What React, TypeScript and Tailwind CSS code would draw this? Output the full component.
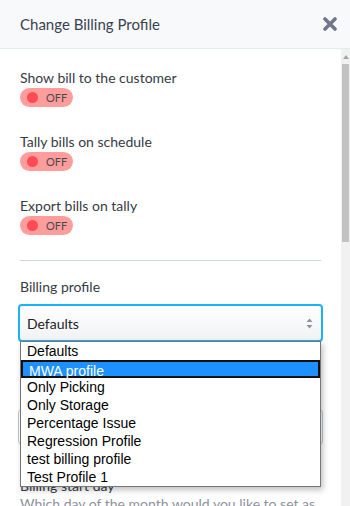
import { useState } from "react";

const profiles = [
  "Defaults",
  "MWA profile",
  "Only Picking",
  "Only Storage",
  "Percentage Issue",
  "Regression Profile",
  "test billing profile",
  "Test Profile 1",
];

function OffToggle() {
  return (
    <div className="mt-[1px] flex h-[19px] w-[53px] items-center rounded-full bg-[#ff9d9d] pl-[7px]">
      <span className="h-[11px] w-[11px] rounded-full bg-[#ff4b55]" />
      <span className="ml-[8px] text-[11px] leading-none text-[#4a4a4a]">OFF</span>
    </div>
  );
}

function SettingRow({ label, last }: { label: string; last?: boolean }) {
  return (
    <div className={last ? "mb-[25px]" : "mb-[26px]"}>
      <div className="text-[14px] leading-[18px] text-[#363b45]">{label}</div>
      <OffToggle />
    </div>
  );
}

export default function App() {
  const [selected] = useState(1);

  return (
    <div className="relative flex h-[506px] w-[350px] flex-col overflow-hidden bg-white font-['Lato','Open_Sans',sans-serif]">
      <header className="flex h-[49px] shrink-0 items-center justify-between border-b border-[#e6ebf2] bg-[#f8f9fb] pl-[20px] pr-[13px]">
        <h1 className="text-[15px] text-[#3b4150]">Change Billing Profile</h1>
        <svg width="14" height="14" viewBox="0 0 14 14" className="text-[#6f7788]">
          <path d="M2 2 L12 12 M12 2 L2 12" stroke="currentColor" strokeWidth="3.6" strokeLinecap="round" />
        </svg>
      </header>

      <div className="flex min-h-0 flex-1">
        <div className="flex-1 px-[20px] pt-[20px]">
          <SettingRow label="Show bill to the customer" />
          <SettingRow label="Tally bills on schedule" />
          <SettingRow label="Export bills on tally" last />

          <div className="border-t border-[#c9d6e6]" />

          <div className="mt-[17px] text-[14px] leading-[18px] text-[#363b45]">Billing profile</div>
          <div className="relative -mx-[2px] mt-[8px]">
            <div className="flex h-[38px] items-center justify-between rounded-[4px] border-2 border-[#1ab3f5] bg-gradient-to-b from-white to-[#f1f2f4] pl-[7px] pr-[8px]">
              <span className="text-[14px] text-[#222]">Defaults</span>
              <svg width="7" height="11" viewBox="0 0 7 11" className="text-[#8a93a3]">
                <path d="M3.5 0.5 L6.5 4 L0.5 4 Z M3.5 10.5 L6.5 7 L0.5 7 Z" fill="currentColor" />
              </svg>
            </div>

            <ul className="absolute left-[2px] right-[2px] top-[37px] z-10 border border-[#767676] bg-white font-['Liberation_Sans',Arial,sans-serif] shadow-[2px_3px_6px_rgba(0,0,0,0.25)]">
              {profiles.map((p, i) => (
                <li
                  key={p}
                  className={`h-[18px] pl-[6px] text-[14px] leading-[18px] ${
                    i === selected
                      ? "border-2 border-[#111] bg-[#1e90ff] pl-[5px] leading-[14px] text-white"
                      : "text-black"
                  }`}
                >
                  {p}
                </li>
              ))}
            </ul>

            <div className="mt-[67px] h-[36px] rounded-[4px] border border-[#c3c8d0]" />
          </div>

          <div className="mt-[32px] text-[14px] leading-[18px] text-[#363b45]">Billing start day</div>
          <div className="text-[14px] leading-[18px] text-[#8d939e]">Which day of the month would you like to set as</div>
        </div>

        <div className="flex w-[9px] shrink-0 flex-col bg-[#f1f1f1]">
          <div className="flex h-[15px] items-center justify-center">
            <span className="h-0 w-0 border-x-[3px] border-b-[4px] border-x-transparent border-b-[#a3a3a3]" />
          </div>
          <div className="mx-[1px] h-[178px] bg-[#c1c1c1]" />
        </div>
      </div>
    </div>
  );
}
